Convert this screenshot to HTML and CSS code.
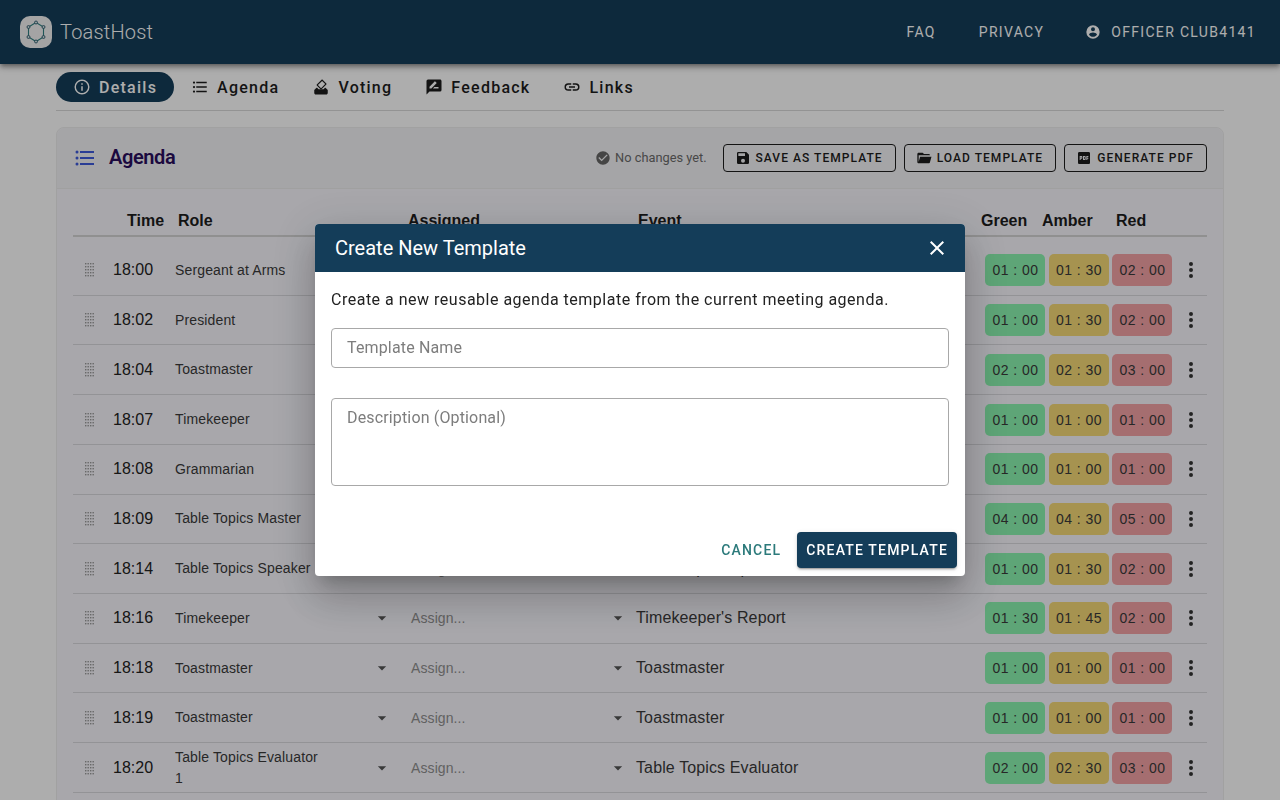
FILE: index.html
```html
<!DOCTYPE html>
<html lang="en">
<head>
<meta charset="utf-8">
<title>ToastHost</title>
<link rel="stylesheet" href="styles.css">
</head>
<body>
<svg class="defs" width="0" height="0" aria-hidden="true">
<symbol id="i-grip" viewBox="0 0 9 14"><g fill="currentColor"><rect x="0" y="0" width="1.4" height="1.4"/><rect x="2.5" y="0" width="1.4" height="1.4"/><rect x="5" y="0" width="1.4" height="1.4"/><rect x="7.5" y="0" width="1.4" height="1.4"/><rect x="0" y="3" width="1.4" height="1.4"/><rect x="2.5" y="3" width="1.4" height="1.4"/><rect x="5" y="3" width="1.4" height="1.4"/><rect x="7.5" y="3" width="1.4" height="1.4"/><rect x="0" y="6" width="1.4" height="1.4"/><rect x="2.5" y="6" width="1.4" height="1.4"/><rect x="5" y="6" width="1.4" height="1.4"/><rect x="7.5" y="6" width="1.4" height="1.4"/><rect x="0" y="9" width="1.4" height="1.4"/><rect x="2.5" y="9" width="1.4" height="1.4"/><rect x="5" y="9" width="1.4" height="1.4"/><rect x="7.5" y="9" width="1.4" height="1.4"/><rect x="0" y="12" width="1.4" height="1.4"/><rect x="2.5" y="12" width="1.4" height="1.4"/><rect x="5" y="12" width="1.4" height="1.4"/><rect x="7.5" y="12" width="1.4" height="1.4"/></g></symbol>
<symbol id="i-down" viewBox="0 0 24 24"><path fill="currentColor" d="M7,10L12,15L17,10H7Z"/></symbol>
<symbol id="i-dots" viewBox="0 0 24 24"><path fill="currentColor" d="M12,16A2,2 0 0,1 14,18A2,2 0 0,1 12,20A2,2 0 0,1 10,18A2,2 0 0,1 12,16M12,10A2,2 0 0,1 14,12A2,2 0 0,1 12,14A2,2 0 0,1 10,12A2,2 0 0,1 12,10M12,4A2,2 0 0,1 14,6A2,2 0 0,1 12,8A2,2 0 0,1 10,6A2,2 0 0,1 12,4Z"/></symbol>
<symbol id="i-list" viewBox="0 0 24 24"><path fill="currentColor" d="M7,5H21V7H7V5M7,13V11H21V13H7M4,4.5A1.5,1.5 0 0,1 5.5,6A1.5,1.5 0 0,1 4,7.5A1.5,1.5 0 0,1 2.5,6A1.5,1.5 0 0,1 4,4.5M4,10.5A1.5,1.5 0 0,1 5.5,12A1.5,1.5 0 0,1 4,13.5A1.5,1.5 0 0,1 2.5,12A1.5,1.5 0 0,1 4,10.5M7,19V17H21V19H7M4,16.5A1.5,1.5 0 0,1 5.5,18A1.5,1.5 0 0,1 4,19.5A1.5,1.5 0 0,1 2.5,18A1.5,1.5 0 0,1 4,16.5Z"/></symbol>
</svg>

<div class="page">
  <header class="appbar">
    <div class="brand">
      <span class="logo">
        <svg width="24" height="24" viewBox="0 0 24 24"><path d="M12 2.5L19.5 7V17L12 21.5L4.5 17V7Z" fill="none" stroke="#2f7f80" stroke-width="1.1"/><g fill="#cfe0e0" stroke="#1f4d63" stroke-width=".8"><circle cx="12" cy="2.5" r="1.5"/><circle cx="19.5" cy="7" r="1.5"/><circle cx="19.5" cy="17" r="1.5"/><circle cx="12" cy="21.5" r="1.5"/><circle cx="4.5" cy="17" r="1.5"/><circle cx="4.5" cy="7" r="1.5"/></g></svg>
      </span>
      <span class="brand-name">ToastHost</span>
    </div>
    <nav class="topnav">
      <a class="toplink faq">FAQ</a>
      <a class="toplink">PRIVACY</a>
      <a class="toplink user"><svg class="ic16" viewBox="0 0 24 24"><path fill="currentColor" d="M12,19.2C9.5,19.2 7.29,17.92 6,16C6.03,14 10,12.9 12,12.9C14,12.9 17.97,14 18,16C16.71,17.92 14.5,19.2 12,19.2M12,5A3,3 0 0,1 15,8A3,3 0 0,1 12,11A3,3 0 0,1 9,8A3,3 0 0,1 12,5M12,2A10,10 0 0,0 2,12A10,10 0 0,0 12,22A10,10 0 0,0 22,12A10,10 0 0,0 12,2Z"/></svg>OFFICER CLUB4141</a>
    </nav>
  </header>

  <main class="content">
    <div class="tabs">
      <a class="tab active"><svg class="ic18" viewBox="0 0 24 24"><path fill="currentColor" d="M11,9H13V7H11M12,20C7.59,20 4,16.41 4,12C4,7.59 7.59,4 12,4C16.41,4 20,7.59 20,12C20,16.41 16.41,20 12,20M12,2A10,10 0 0,0 2,12A10,10 0 0,0 12,22A10,10 0 0,0 22,12A10,10 0 0,0 12,2M11,17H13V11H11V17Z"/></svg>Details</a>
      <a class="tab"><svg class="ic18"><use href="#i-list"/></svg>Agenda</a>
      <a class="tab"><svg class="ic18" viewBox="0 0 24 24"><path fill="currentColor" fill-rule="evenodd" d="M3,16L6,13H6.83L8.83,15H15.32L17.32,13H18L21,16V20C21,21.11 20.1,22 19,22H5C3.89,22 3,21.1 3,20V16ZM11.34,15L6.39,10.07C6,9.68 6,9.05 6.39,8.66L12.76,2.29C13.15,1.9 13.78,1.9 14.16,2.3L19.11,7.25C19.5,7.64 19.5,8.27 19.11,8.66L12.75,15C12.36,15.41 11.73,15.41 11.34,15ZM13.46,3.9L7.9,9.36L12.05,13.5L17.6,7.95L13.46,3.9Z"/></svg>Voting</a>
      <a class="tab"><svg class="ic18" viewBox="0 0 24 24"><path fill="currentColor" d="M18,14H10.5L12.5,12H18M6,14V11.5L12.88,4.64C13.07,4.45 13.39,4.45 13.59,4.64L15.35,6.41C15.55,6.61 15.55,6.92 15.35,7.12L8.47,14M20,2H4A2,2 0 0,0 2,4V22L6,18H20A2,2 0 0,0 22,16V4C22,2.89 21.1,2 20,2Z"/></svg>Feedback</a>
      <a class="tab"><svg class="ic18" viewBox="0 0 24 24"><path fill="currentColor" d="M3.9,12C3.9,10.29 5.29,8.9 7,8.9H11V7H7A5,5 0 0,0 2,12A5,5 0 0,0 7,17H11V15.1H7C5.29,15.1 3.9,13.71 3.9,12M8,13H16V11H8V13M17,7H13V8.9H17C18.71,8.9 20.1,10.29 20.1,12C20.1,13.71 18.71,15.1 17,15.1H13V17H17A5,5 0 0,0 22,12A5,5 0 0,0 17,7Z"/></svg>Links</a>
    </div>

    <section class="card">
      <div class="card-head">
        <svg class="ic24 blue"><use href="#i-list"/></svg>
        <h2 class="card-title">Agenda</h2>
        <span class="status"><svg class="ic16" viewBox="0 0 24 24"><path fill="currentColor" d="M12 2C6.5 2 2 6.5 2 12S6.5 22 12 22 22 17.5 22 12 17.5 2 12 2M10 17L5 12L6.41 10.59L10 14.17L17.59 6.58L19 8L10 17Z"/></svg>No changes yet.</span>
        <button class="obtn"><svg class="ic16" viewBox="0 0 24 24"><path fill="currentColor" d="M15,9H5V5H15M12,19A3,3 0 0,1 9,16A3,3 0 0,1 12,13A3,3 0 0,1 15,16A3,3 0 0,1 12,19M17,3H5C3.89,3 3,3.9 3,5V19A2,2 0 0,0 5,21H19A2,2 0 0,0 21,19V7L17,3Z"/></svg>SAVE AS TEMPLATE</button>
        <button class="obtn"><svg class="ic16" viewBox="0 0 24 24"><path fill="currentColor" d="M19,20H4C2.89,20 2,19.1 2,18V6C2,4.89 2.89,4 4,4H10L12,6H19A2,2 0 0,1 21,8H21L4,8V18L6.14,10H23.21L20.93,18.5C20.7,19.37 19.92,20 19,20Z"/></svg>LOAD TEMPLATE</button>
        <button class="obtn"><svg class="ic16" viewBox="0 0 24 24"><path fill="currentColor" d="M19 3H5C3.9 3 3 3.9 3 5V19C3 20.1 3.9 21 5 21H19C20.1 21 21 20.1 21 19V5C21 3.9 20.1 3 19 3M9.5 11.5C9.5 12.3 8.8 13 8 13H7V15H5.5V9H8C8.8 9 9.5 9.7 9.5 10.5V11.5M14.5 13.5C14.5 14.3 13.8 15 13 15H10.5V9H13C13.8 9 14.5 9.7 14.5 10.5V13.5M18.5 10.5H17V11.5H18.5V13H17V15H15.5V9H18.5V10.5M12 10.5H13V13.5H12V10.5M7 10.5H8V11.5H7V10.5Z"/></svg>GENERATE PDF</button>
      </div>

      <div class="card-body">
        <div class="grid thead">
          <span></span><span class="h-time">Time</span><span class="h-role">Role</span><span class="h-assign">Assigned</span><span class="h-event">Event</span>
          <span class="h-timers"><span>Green</span><span>Amber</span><span>Red</span></span><span></span>
        </div>

        <div class="grid row"><svg class="grip"><use href="#i-grip"/></svg><span class="time">18:00</span><span class="role"><span class="role-text">Sergeant at Arms</span><svg class="caret"><use href="#i-down"/></svg></span><span class="assign">Assign...<svg class="caret"><use href="#i-down"/></svg></span><span class="event">Sergeant at Arms</span><span class="timers"><span class="chip g">01 : 00</span><span class="chip a">01 : 30</span><span class="chip r">02 : 00</span></span><svg class="more"><use href="#i-dots"/></svg></div>
        <div class="grid row"><svg class="grip"><use href="#i-grip"/></svg><span class="time">18:02</span><span class="role"><span class="role-text">President</span><svg class="caret"><use href="#i-down"/></svg></span><span class="assign">Assign...<svg class="caret"><use href="#i-down"/></svg></span><span class="event">President</span><span class="timers"><span class="chip g">01 : 00</span><span class="chip a">01 : 30</span><span class="chip r">02 : 00</span></span><svg class="more"><use href="#i-dots"/></svg></div>
        <div class="grid row"><svg class="grip"><use href="#i-grip"/></svg><span class="time">18:04</span><span class="role"><span class="role-text">Toastmaster</span><svg class="caret"><use href="#i-down"/></svg></span><span class="assign">Assign...<svg class="caret"><use href="#i-down"/></svg></span><span class="event">Toastmaster</span><span class="timers"><span class="chip g">02 : 00</span><span class="chip a">02 : 30</span><span class="chip r">03 : 00</span></span><svg class="more"><use href="#i-dots"/></svg></div>
        <div class="grid row"><svg class="grip"><use href="#i-grip"/></svg><span class="time">18:07</span><span class="role"><span class="role-text">Timekeeper</span><svg class="caret"><use href="#i-down"/></svg></span><span class="assign">Assign...<svg class="caret"><use href="#i-down"/></svg></span><span class="event">Timekeeper</span><span class="timers"><span class="chip g">01 : 00</span><span class="chip a">01 : 00</span><span class="chip r">01 : 00</span></span><svg class="more"><use href="#i-dots"/></svg></div>
        <div class="grid row"><svg class="grip"><use href="#i-grip"/></svg><span class="time">18:08</span><span class="role"><span class="role-text">Grammarian</span><svg class="caret"><use href="#i-down"/></svg></span><span class="assign">Assign...<svg class="caret"><use href="#i-down"/></svg></span><span class="event">Grammarian</span><span class="timers"><span class="chip g">01 : 00</span><span class="chip a">01 : 00</span><span class="chip r">01 : 00</span></span><svg class="more"><use href="#i-dots"/></svg></div>
        <div class="grid row"><svg class="grip"><use href="#i-grip"/></svg><span class="time">18:09</span><span class="role"><span class="role-text">Table Topics Master</span><svg class="caret"><use href="#i-down"/></svg></span><span class="assign">Assign...<svg class="caret"><use href="#i-down"/></svg></span><span class="event">Table Topics Master</span><span class="timers"><span class="chip g">04 : 00</span><span class="chip a">04 : 30</span><span class="chip r">05 : 00</span></span><svg class="more"><use href="#i-dots"/></svg></div>
        <div class="grid row"><svg class="grip"><use href="#i-grip"/></svg><span class="time">18:14</span><span class="role"><span class="role-text">Table Topics Speaker</span><svg class="caret"><use href="#i-down"/></svg></span><span class="assign">Assign...<svg class="caret"><use href="#i-down"/></svg></span><span class="event">Table Topics Speaker</span><span class="timers"><span class="chip g">01 : 00</span><span class="chip a">01 : 30</span><span class="chip r">02 : 00</span></span><svg class="more"><use href="#i-dots"/></svg></div>
        <div class="grid row"><svg class="grip"><use href="#i-grip"/></svg><span class="time">18:16</span><span class="role"><span class="role-text">Timekeeper</span><svg class="caret"><use href="#i-down"/></svg></span><span class="assign">Assign...<svg class="caret"><use href="#i-down"/></svg></span><span class="event">Timekeeper's Report</span><span class="timers"><span class="chip g">01 : 30</span><span class="chip a">01 : 45</span><span class="chip r">02 : 00</span></span><svg class="more"><use href="#i-dots"/></svg></div>
        <div class="grid row"><svg class="grip"><use href="#i-grip"/></svg><span class="time">18:18</span><span class="role"><span class="role-text">Toastmaster</span><svg class="caret"><use href="#i-down"/></svg></span><span class="assign">Assign...<svg class="caret"><use href="#i-down"/></svg></span><span class="event">Toastmaster</span><span class="timers"><span class="chip g">01 : 00</span><span class="chip a">01 : 00</span><span class="chip r">01 : 00</span></span><svg class="more"><use href="#i-dots"/></svg></div>
        <div class="grid row"><svg class="grip"><use href="#i-grip"/></svg><span class="time">18:19</span><span class="role"><span class="role-text">Toastmaster</span><svg class="caret"><use href="#i-down"/></svg></span><span class="assign">Assign...<svg class="caret"><use href="#i-down"/></svg></span><span class="event">Toastmaster</span><span class="timers"><span class="chip g">01 : 00</span><span class="chip a">01 : 00</span><span class="chip r">01 : 00</span></span><svg class="more"><use href="#i-dots"/></svg></div>
        <div class="grid row"><svg class="grip"><use href="#i-grip"/></svg><span class="time">18:20</span><span class="role"><span class="role-text">Table Topics Evaluator 1</span><svg class="caret"><use href="#i-down"/></svg></span><span class="assign">Assign...<svg class="caret"><use href="#i-down"/></svg></span><span class="event">Table Topics Evaluator</span><span class="timers"><span class="chip g">02 : 00</span><span class="chip a">02 : 30</span><span class="chip r">03 : 00</span></span><svg class="more"><use href="#i-dots"/></svg></div>
      </div>
    </section>
  </main>
</div>

<div class="scrim"></div>

<div class="dialog" role="dialog" aria-label="Create New Template">
  <div class="dlg-head">
    <span class="dlg-title">Create New Template</span>
    <svg class="dlg-close" viewBox="0 0 24 24"><path fill="currentColor" d="M19,6.41L17.59,5L12,10.59L6.41,5L5,6.41L10.59,12L5,17.59L6.41,19L12,13.41L17.59,19L19,17.59L13.41,12L19,6.41Z"/></svg>
  </div>
  <div class="dlg-body">
    <p class="dlg-text">Create a new reusable agenda template from the current meeting agenda.</p>
    <input class="field field-input" type="text" placeholder="Template Name">
    <textarea class="field field-area" placeholder="Description (Optional)"></textarea>
  </div>
  <div class="dlg-actions">
    <button class="btn-text">CANCEL</button>
    <button class="btn-primary">CREATE TEMPLATE</button>
  </div>
</div>
</body>
</html>
```
FILE: styles.css
```css
* { box-sizing: border-box; }
html, body { margin: 0; height: 100%; overflow: hidden; }
body { background: #fff; font-family: Roboto, "Liberation Sans", sans-serif; color: #222; }
.defs { position: absolute; }
.page { height: 800px; overflow: hidden; }

.appbar {
  position: relative; z-index: 1;
  height: 64px; background: #143d59; color: #fff;
  display: flex; align-items: center; justify-content: space-between;
  padding: 0 24px 0 20px;
  box-shadow: 0 2px 4px -1px rgba(0,0,0,.3), 0 4px 5px rgba(0,0,0,.2), 0 1px 10px rgba(0,0,0,.15);
}
.brand { display: flex; align-items: center; gap: 8px; }
.logo { width: 32px; height: 32px; border-radius: 10px; background: #f2f2f2; display: flex; align-items: center; justify-content: center; }
.brand-name { font-size: 20px; letter-spacing: .2px; font-weight: 300; }
.topnav { display: flex; align-items: center; gap: 41px; }
.toplink { font-size: 14px; font-weight: 400; letter-spacing: 1.32px; display: flex; align-items: center; }
.faq { margin-right: 2px; }
.user { gap: 10px; }
.ic16 { width: 16px; height: 16px; flex: none; }
.ic18 { width: 18px; height: 18px; flex: none; }
.ic24 { width: 24px; height: 24px; flex: none; }
.blue { color: #3f5bdc; }

.content { padding: 8px 56px 0; }
.tabs { display: flex; height: 39px; border-bottom: 1px solid #d9d9d9; align-items: flex-start; }
.tab {
  height: 30px; padding: 0 16px 0 17px; display: flex; align-items: center; gap: 8px;
  font-size: 16px; font-weight: 500; letter-spacing: 1.25px; color: #1d1d1d; border-radius: 15px;
}
.tab.active { background: #143d59; color: #fff; padding: 0 17px; }

.card { margin-top: 16px; border: 1px solid #ededed; border-radius: 8px 8px 0 0; background: #f8f7fd; }
.card-head {
  height: 61px; display: flex; align-items: center; padding: 0 16px 1px 16px;
  background: #f4f4f6; border-bottom: 1px solid #ececec; border-radius: 8px 8px 0 0;
}
.card-title { margin: 0 auto 2px 12px; font-size: 20px; font-weight: 600; letter-spacing: -.4px; color: #2a0e5e; }
.status { display: flex; align-items: center; gap: 4px; font-size: 12.8px; color: #6b6b6b; margin-right: 16px; }
.status .ic16 { color: #666; }
.obtn {
  height: 28px; margin-left: 8px; padding: 0 12px 0 11px; display: flex; align-items: center; gap: 5px;
  border: 1px solid #1c1c1c; border-radius: 4px; background: transparent; color: #1c1c1c;
  font-family: inherit; font-size: 12px; font-weight: 500; letter-spacing: 1.05px;
}
.obtn:first-of-type { margin-left: 0; }

.card-body { padding: 0 16px 40px; font-family: "Liberation Sans", Arial, sans-serif; }
.grid { display: grid; grid-template-columns: 40px 62px 236px 225px 349px 187px 35px; align-items: center; }
.thead { height: 48px; border-bottom: 2px solid #d4d4d4; font-size: 16px; font-weight: 700; color: #1c1c1c; align-items: end; padding-bottom: 5px; margin-bottom: 9px; }
.h-time { padding-left: 14px; white-space: nowrap; }
.h-role { padding-left: 3px; }
.h-assign { margin-left: -3px; }
.h-event { padding-left: 2px; }
.h-timers { display: flex; margin-left: -4px; }
.h-timers span:nth-child(1) { width: 61px; }
.h-timers span:nth-child(2) { width: 74px; }

.row { height: 49.72px; border-bottom: 1px solid #d9d9de; }
.grip { width: 9px; height: 14px; margin-left: 12px; color: #9a9a9a; }
.time { font-size: 16px; color: #222; }
.role { display: flex; align-items: center; font-size: 14px; letter-spacing: .14px; color: #3a3a3a; line-height: 21px; padding-right: 19px; justify-content: space-between; }
.role-text { width: 150px; }
.caret { width: 20px; height: 20px; flex: none; color: #555; }
.assign { display: flex; align-items: center; justify-content: space-between; font-size: 14px; letter-spacing: .1px; color: #8f8f8f; padding-right: 8px; }
.event { font-size: 16px; letter-spacing: .12px; color: #3a3a3a; }
.timers { display: flex; gap: 3.5px; }
.chip {
  width: 60px; height: 32px; border-radius: 5px; display: flex; align-items: center; justify-content: center;
  font-size: 14px; letter-spacing: .45px; color: #3a3a3a; padding-left: 1px;
}
.g { background: #8bf4b0; }
.a { background: #f5d976; }
.r { background: #f4a3a6; }
.more { width: 24px; height: 24px; color: #333; margin-left: 7px; }

.scrim { position: fixed; inset: 0; background: rgba(0,0,0,.32); z-index: 5; }

.dialog {
  position: fixed; z-index: 6; left: 315px; top: 224px; width: 650px; height: 352px;
  background: #fff; border-radius: 4px; overflow: hidden;
  display: flex; flex-direction: column;
  box-shadow: 0 11px 15px -7px rgba(0,0,0,.2), 0 24px 38px 3px rgba(0,0,0,.14), 0 9px 46px 8px rgba(0,0,0,.12);
}
.dlg-head { height: 48px; flex: none; background: #143d59; color: #fff; display: flex; align-items: center; justify-content: space-between; padding: 0 16px 0 20px; }
.dlg-title { font-size: 20px; }
.dlg-close { width: 24px; height: 24px; }
.dlg-body { padding: 16px 16px 0; display: flex; flex-direction: column; flex: 1; }
.dlg-text { margin: 0 0 16px; font-size: 16px; line-height: 24px; letter-spacing: .5px; color: #222; height: 24px; }
.field {
  display: block; width: 100%; border: 1px solid #a8a8a8; border-radius: 4px; background: #fff;
  padding: 0 15px; font-family: inherit; font-size: 16px; letter-spacing: .15px; color: #222; outline: 0; resize: none;
}
.field::placeholder { color: #7d7d7d; opacity: 1; }
.field-input { height: 40px; margin-bottom: 30px; padding-bottom: 2px; }
.field-area { height: 88px; padding-top: 9px; line-height: 20px; }
.dlg-actions { display: flex; justify-content: flex-end; align-items: center; gap: 7px; padding: 0 8px 8px; }
.btn-text, .btn-primary { font-family: inherit; font-size: 14px; font-weight: 500; letter-spacing: 1.18px; border: 0; border-radius: 4px; height: 36px; padding: 0 9px; }
.btn-text { background: transparent; color: #2c7a7b; }
.btn-primary { background: #143d59; color: #fff; box-shadow: 0 3px 1px -2px rgba(0,0,0,.2), 0 2px 2px rgba(0,0,0,.14), 0 1px 5px rgba(0,0,0,.12); }
```
